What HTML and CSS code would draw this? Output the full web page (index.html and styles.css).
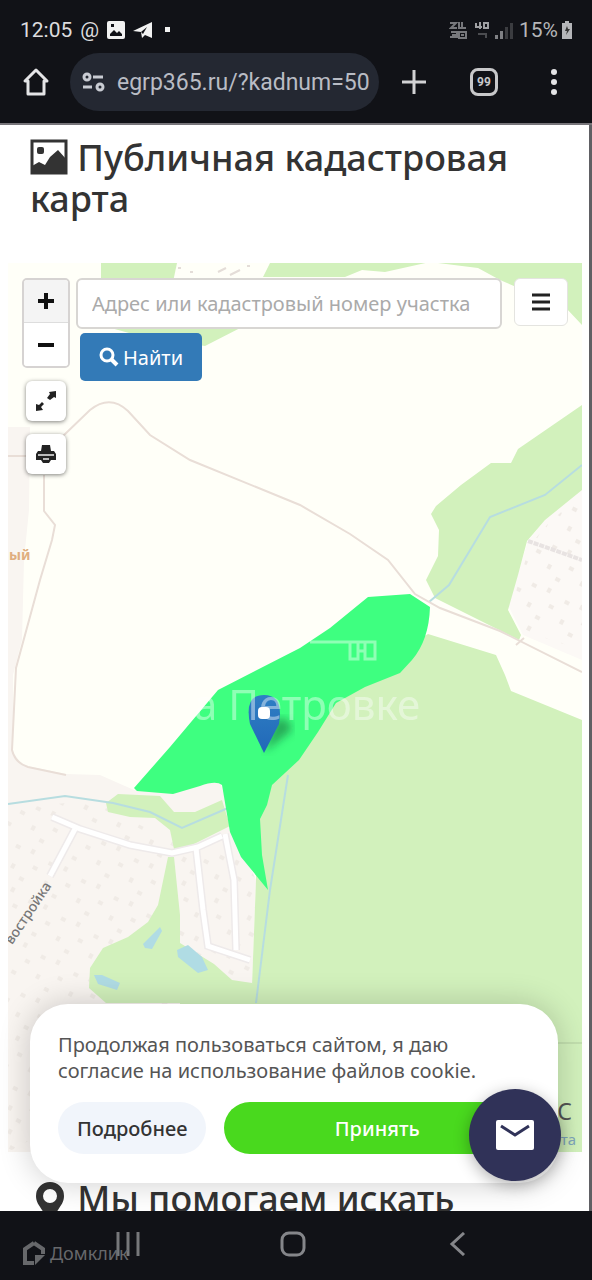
FILE: index.html
```html
<!DOCTYPE html>
<html lang="ru">
<head>
    <meta charset="UTF-8">
    <meta name="viewport" content="width=device-width, initial-scale=1.0">
    <title>Публичная кадастровая карта</title>
    <link rel="stylesheet" href="styles.css">
</head>
<body>
    <header class="browser">
        <div class="status-bar">
            <span class="clock">12:05</span>
            <span class="at">@</span>
            <svg class="status-icon" viewBox="0 0 18 18" width="18" height="18">
                <rect x="0" y="0" width="18" height="18" rx="2" fill="#f2f2f2"/>
                <path d="M3 13l4-4 3 3 2-2 3 3v2H3z" fill="#111217"/>
                <rect x="4" y="3" width="3" height="3" fill="#111217"/>
            </svg>
            <svg class="status-icon" viewBox="0 0 20 18" width="20" height="18">
                <path d="M0 10L19 1v16l-7-3-3 3-1-6z" fill="#f2f2f2"/>
                <path d="M8 11l6-5-4 7z" fill="#111217"/>
            </svg>
            <span class="dot"></span>
            <span class="status-right">
                <svg viewBox="0 0 66 20" width="66" height="20">
                    <g fill="none" stroke="#77787c" stroke-width="2">
                        <path d="M1 3h6l-5 5h6M10 2v6h7M13 2v5M2 12h6v5H1M10 12h7v6h-7zM3 15h4M12 15h3"/>
                        <path d="M27 3v4h6M31 2v7M35 3h4v5h-4z" stroke="#a0a1a4"/>
                        <path d="M29 14h8v4" stroke="#4b4c50"/>
                    </g>
                    <path d="M46 19v-4h3v4zM51 19v-8h3v8z" fill="#808185"/>
                    <path d="M56 19V7h3v12zM61 19V3h3v16z" fill="#3b3c40"/>
                </svg>
                <span class="battery-level">15%</span>
                <svg viewBox="0 0 10 18" width="10" height="18">
                    <path d="M3 0h4v2h3v16H0V2h3z" fill="#b5b6b9"/>
                    <path d="M5 5L3 10h2l-1 4 4-6H6z" fill="#333"/>
                </svg>
            </span>
        </div>
        <div class="toolbar">
            <button class="home" aria-label="Домой">
                <svg viewBox="0 0 28 30" width="28" height="30">
                    <path d="M14 3L3 14h3v13h16V14h3z" fill="none" stroke="#e4e4e6" stroke-width="3" stroke-linejoin="round"/>
                </svg>
            </button>
            <div class="address">
                <svg class="address-icon" viewBox="0 0 24 20" width="24" height="20">
                    <g fill="none" stroke="#c9ccd3" stroke-width="3">
                        <circle cx="6" cy="5" r="3"/>
                        <path d="M12 5h10M2 15h9"/>
                        <circle cx="19" cy="15" r="3"/>
                    </g>
                </svg>
                <input class="address-input" type="text" value="egrp365.ru/?kadnum=50" aria-label="Адресная строка">
            </div>
            <button class="tool" aria-label="Новая вкладка">
                <svg viewBox="0 0 26 26" width="26" height="26">
                    <path d="M13 1v24M1 13h24" stroke="#d2d2d4" stroke-width="3"/>
                </svg>
            </button>
            <button class="tool" aria-label="Вкладки">
                <span class="tab-count">99</span>
            </button>
            <button class="tool" aria-label="Меню">
                <svg viewBox="0 0 6 26" width="6" height="26" fill="#e4e4e6">
                    <circle cx="3" cy="3" r="3"/>
                    <circle cx="3" cy="13" r="3"/>
                    <circle cx="3" cy="23" r="3"/>
                </svg>
            </button>
        </div>
    </header>

    <main class="page">
        <h1 class="title">
            <svg class="title-icon" viewBox="0 0 38 36" width="38" height="36">
                <rect x="2" y="2" width="34" height="32" fill="#fff" stroke="#333" stroke-width="3"/>
                <rect x="7" y="8" width="7" height="7" rx="2" fill="#333"/>
                <path d="M2 34v-7l7-4 6 3 5-8 8-7 8 9v14z" fill="#333"/>
            </svg>
            Публичная кадастровая карта
        </h1>

        <section class="map">
            <svg class="map-canvas" viewBox="8 263 574 889" preserveAspectRatio="xMinYMin slice">
                <defs>
                    <pattern id="houses" width="37" height="43" patternUnits="userSpaceOnUse" patternTransform="rotate(28)">
                        <path d="M4 6h5v4H4zM20 3h4v5h-4zM29 17h5v4h-5zM9 25h4v5H9zM22 33h5v4h-5z" fill="#f0ebe6"/>
                    </pattern>
                    <linearGradient id="pin" x1="0" y1="0" x2="0" y2="1">
                        <stop offset="0" stop-color="#2f7fc4"/>
                        <stop offset="1" stop-color="#2168b8"/>
                    </linearGradient>
                    <filter id="soft"><feGaussianBlur stdDeviation="4"/></filter>
                </defs>
                <rect x="8" y="263" width="574" height="889" fill="#fffff8"/>

                <!-- settlements -->
                <path d="M8 427H30L29 510 24 560 22 640 13 675V752L22 765 66 774 100 775 134 790 220 782 240 845 256 880 252 985 220 1040 30 1152H8z" fill="#f9f5f1"/>
                <path d="M8 810L90 800 180 845 240 845 256 880 252 985 180 1060 8 1152z" fill="url(#houses)"/>
                <path d="M582 488L545 520 528 541 508 605 523 635 582 660z" fill="#fcf9f6"/>
                <path d="M582 493L547 525 530 545 512 605 527 632 582 650z" fill="url(#houses)"/>

                <!-- woods -->
                <g fill="#d2f1bc">
                    <path d="M101 263H177L173 282H101z"/>
                    <path d="M270 263H582V325L566 308 500 280 478 268 430 262 385 272 362 270 345 277H263z"/>
                    <path d="M100 325H246L205 346 140 336z"/>
                    <path d="M582 405L518 449 511 463H491L461 485 436 506 431 514 439 530 438 556 426 580 435 598 519 640 521 635 508 610 518 575 527 541 545 520 582 490z"/>
                    <path d="M428 634L496 655 505 675 511 691 582 720V1152H250L252 985 256 880 255 800 280 750 330 690 400 650z"/>
                    <path d="M106 803L118 794 160 796 174 812H195L222 800 230 826 190 846 174 849 170 830 155 818 130 817 108 812z"/>
                    <path d="M168 857L158 905 148 922 128 937 103 948 90 968 89 988 106 1003H252V983L232 980 214 964 180 943V915L174 857z"/>
                    <path d="M180 1003H582V1152H180z"/>
                </g>
                <path d="M555 1043h27" stroke="#c2dfae" stroke-width="2"/>

                <!-- ponds -->
                <g fill="#b0dce4">
                    <path d="M143 944L160 927 162 931 152 949 145 948z"/>
                    <path d="M177 950L188 945 202 957 208 970 198 973 178 957z"/>
                    <path d="M94 975H102L120 983 117 990 98 984z"/>
                </g>

                <!-- village streets -->
                <g fill="none" stroke="#eeeaea" stroke-width="8">
                    <path d="M52 817L80 829 130 845 172 853 198 847 222 836"/>
                    <path d="M75 829L50 876"/>
                    <path d="M196 848L203 910 208 946 250 960"/>
                    <path d="M225 834L234 880 236 950"/>
                </g>
                <g fill="none" stroke="#fff" stroke-width="5">
                    <path d="M52 817L80 829 130 845 172 853 198 847 222 836"/>
                    <path d="M75 829L50 876"/>
                    <path d="M196 848L203 910 208 946 250 960"/>
                    <path d="M225 834L234 880 236 950"/>
                </g>
                <path d="M528 541L582 560" fill="none" stroke="#e8e3e2" stroke-width="4" stroke-dasharray="5 1"/>

                <!-- streams -->
                <g fill="none" stroke="#b7dde0" stroke-width="2">
                    <path d="M8 804L65 796 113 803 150 812 182 828 228 808"/>
                    <path d="M429 602L449 585 490 517 545 495 582 465"/>
                    <path d="M288 775L270 890 256 1003"/>
                </g>

                <!-- dirt roads -->
                <g fill="none" stroke="#e9ded7" stroke-width="2">
                    <path d="M62 437L90 410Q110 394 128 411L150 435 190 460 300 505 350 534 388 560 415 594 440 608 500 631 582 672"/>
                    <path d="M44 475V511L55 525 52 540 40 580 16 668 12 750Q15 763 28 767L66 775"/>
                    <path d="M8 456H30"/>
                    <path d="M516 645L524 638"/>
                </g>
                <path d="M178 268h3M190 272h3M218 272l8-4M230 275l10-5M247 266h3" stroke="#e4ddd8" stroke-width="2"/>

                <text class="place" x="9" y="560">ый</text>
                <text class="street" text-anchor="end" transform="translate(52 886) rotate(-56)">востройка</text>

                <!-- selected plot -->
                <path d="M368 597L410 594 430 607Q429 640 412 660L400 673 365 687 336 703 318 732 299 760 272 785 267 805 260 819 262 855 268 890 241 857 230 832 222 785Q216 780 200 786L173 794 137 791 134 788 170 747 218 690 300 648 330 628z" fill="#3eff80"/>

                <path d="M264 752L292 730 288 720 276 718z" fill="#14743c" opacity="0.6" filter="url(#soft)"/>
                <path d="M264 753L250 724Q244 695 264 695 284 695 279 724z" fill="url(#pin)"/>
                <rect x="258" y="707" width="12" height="12" rx="4" fill="#fff"/>

                <!-- agency mark -->
                <g opacity="0.42">
                    <path d="M310 642H375V659H365V651H358V659H350V643M358 643V651M365 643V651" fill="none" stroke="#fff" stroke-width="3"/>
                    <text class="mark" x="194" y="720">а Петровке</text>
                </g>
            </svg>

            <div class="map-controls">
                <div class="map-left">
                    <div class="zoom-group">
                        <button class="zoom-btn zoom-in" aria-label="Приблизить"><svg viewBox="0 0 16 16" width="16" height="16"><path d="M8 0v16M0 8h16" stroke="#111" stroke-width="4"/></svg></button>
                        <button class="zoom-btn" aria-label="Отдалить"><svg viewBox="0 0 16 16" width="16" height="16"><path d="M0 8h16" stroke="#111" stroke-width="4"/></svg></button>
                    </div>
                    <button class="map-btn" aria-label="Во весь экран">
                        <svg viewBox="0 0 22 22" width="22" height="22" fill="#222">
                            <path d="M21 1v7l-2-1-4 3-3-2 3-4-1-2z"/>
                            <path d="M1 21v-7l3 1 3-3 2 2-3 3 2 3z"/>
                        </svg>
                    </button>
                    <button class="map-btn" aria-label="Печать">
                        <svg viewBox="0 0 22 20" width="22" height="20">
                            <path d="M7 1h8l1 6h3l2 3v6h-5l-2 3H8l-2-3H1v-6l2-3h3z" fill="#222"/>
                            <path d="M3 11h16M8 15h6" stroke="#bbb" stroke-width="2"/>
                        </svg>
                    </button>
                </div>
                <form class="search">
                    <input class="search-input" type="text" placeholder="Адрес или кадастровый номер участка" aria-label="Адрес или кадастровый номер участка">
                    <button class="search-btn" type="button">
                        <svg viewBox="0 0 20 20" width="20" height="20">
                            <circle cx="8" cy="8" r="6" fill="none" stroke="#fff" stroke-width="3"/>
                            <path d="M12 12l6 6" stroke="#fff" stroke-width="4"/>
                        </svg>
                        Найти
                    </button>
                </form>
                <button class="layers-btn" aria-label="Слои">
                    <svg viewBox="0 0 18 18" width="18" height="18"><path d="M0 2h18M0 9h18M0 16h18" stroke="#222" stroke-width="3"/></svg>
                </button>
            </div>

            <div class="attribution"><span class="scale">С</span><a class="credit" href="#">та</a></div>
        </section>

        <h2 class="title subtitle">
            <svg class="marker-icon" viewBox="0 0 28 40" width="28" height="40">
                <path d="M14 0a14 14 0 0 1 14 14c0 6-3 9-6 14l-8 12-8-12C3 23 0 20 0 14A14 14 0 0 1 14 0zm0 7a7 7 0 1 0 0 14 7 7 0 0 0 0-14z" fill="#333"/>
            </svg>
            Мы помогаем искать
        </h2>

        <div class="cookie">
            <p class="cookie-text">Продолжая пользоваться сайтом, я даю согласие на использование файлов cookie.</p>
            <div class="cookie-actions">
                <button class="pill more">Подробнее</button>
                <button class="pill accept">Принять</button>
            </div>
        </div>
        <button class="chat" aria-label="Написать нам">
            <svg viewBox="0 0 38 30" width="38" height="30">
                <rect width="38" height="30" rx="2" fill="#fff"/>
                <path d="M5 6l14 9 14-9" fill="none" stroke="#303258" stroke-width="3"/>
            </svg>
        </button>
    </main>

    <footer class="navbar">
        <button class="nav-btn" aria-label="Недавние"><svg viewBox="0 0 24 24" width="24" height="24"><path d="M2 0v24M12 0v24M22 0v24" stroke="#77787b" stroke-width="3"/></svg></button>
        <button class="nav-btn" aria-label="Главный экран"><svg viewBox="0 0 26 26" width="26" height="26"><rect x="2" y="2" width="22" height="22" rx="7" fill="none" stroke="#85868a" stroke-width="3"/></svg></button>
        <button class="nav-btn" aria-label="Назад"><svg viewBox="0 0 24 24" width="24" height="24"><path d="M18 1L6 12l12 11" fill="none" stroke="#85868a" stroke-width="3"/></svg></button>
        <div class="watermark">
            <svg viewBox="0 0 22 24" width="22" height="24">
                <path d="M11 2L2 8v14h9M11 2l9 6v5" fill="none" stroke="#67686b" stroke-width="4"/>
                <path d="M12 14h10L12 24z" fill="#67686b"/>
            </svg>
            Домклик
        </div>
    </footer>
</body>
</html>
```
FILE: styles.css
```css
* {
    box-sizing: border-box;
}

body {
    display: flex;
    flex-direction: column;
    height: 100vh;
    margin: 0;
    overflow: hidden;
    background-color: #fff;
    color: #333;
    font-family: "Noto Sans", "Open Sans", sans-serif;
}

button {
    display: flex;
    justify-content: center;
    align-items: center;
    padding: 0;
    border: none;
    background: none;
    font-family: inherit;
    cursor: pointer;
}

svg {
    flex: none;
}

.browser {
    flex: none;
    background-color: #111217;
    color: #dcdcde;
    font-family: Roboto, sans-serif;
    padding-bottom: 12px;
    border-bottom: 2px solid #77757a;
}

.status-bar {
    display: flex;
    align-items: center;
    gap: 8px;
    height: 53px;
    padding: 6px 20px 0;
    font-size: 21px;
}

.dot {
    width: 5px;
    height: 5px;
    margin-left: 4px;
    background-color: #f2f2f2;
}

.status-right {
    display: flex;
    align-items: center;
    gap: 4px;
    margin-left: auto;
    color: #b5b6b9;
}

.toolbar {
    display: flex;
    align-items: center;
    padding: 0 3px 0 22px;
}

.tool {
    width: 70px;
    height: 58px;
}

.address {
    display: flex;
    align-items: center;
    gap: 12px;
    flex: 1;
    min-width: 0;
    height: 58px;
    margin-left: 20px;
    padding: 0 8px 0 11px;
    border-radius: 29px;
    background-color: #242832;
}

.address-input {
    flex: 1;
    min-width: 0;
    padding: 0;
    border: none;
    background: none;
    color: #b9bcc4;
    font-family: Roboto, sans-serif;
    font-size: 23px;
}

.tab-count {
    width: 28px;
    height: 28px;
    border: 3px solid #c8c8ca;
    border-radius: 8px;
    color: #c8c8ca;
    font-size: 12px;
    font-weight: bold;
    line-height: 22px;
}

.page {
    position: relative;
    flex: 1;
    min-height: 0;
    overflow: hidden;
    border-right: 3px solid #606064;
    padding: 0 7px 0 8px;
}

.title {
    margin: 0;
    padding: 12px 22px 44px;
    font-size: 36px;
    font-weight: 500;
    line-height: 41px;
}

.title-icon {
    vertical-align: -4px;
}

.map {
    position: relative;
    height: 889px;
}

.map-canvas {
    display: block;
    width: 100%;
    height: 100%;
}

.place {
    fill: #e0ae80;
    font-size: 14px;
    font-weight: bold;
}

.street {
    fill: #777;
    font-size: 14px;
    font-weight: 500;
}

.mark {
    fill: #fff;
    font-size: 42px;
}

.map-controls {
    position: absolute;
    top: 15px;
    left: 14px;
    right: 14px;
    display: flex;
    align-items: flex-start;
}

.map-left {
    display: flex;
    flex-direction: column;
    align-items: center;
    gap: 13px;
    width: 48px;
}

.zoom-group {
    border: 2px solid #d6d3d2;
    border-radius: 5px;
    overflow: hidden;
}

.zoom-btn {
    width: 44px;
    height: 43px;
    background-color: #fff;
}

.zoom-in {
    background-color: #f4f4f4;
    border-bottom: 1px solid #ddd;
}

.map-btn {
    width: 40px;
    height: 40px;
    border-radius: 6px;
    background-color: #fff;
    box-shadow: 0 1px 4px rgba(0, 0, 0, 0.5);
}

.search {
    display: flex;
    flex-direction: column;
    align-items: flex-start;
    gap: 4px;
    flex: 1;
    min-width: 0;
    margin: 0 12px 0 6px;
}

.search-input {
    width: 100%;
    height: 51px;
    padding: 0 14px;
    border: 2px solid #d8d6d3;
    border-radius: 6px;
    background-color: #fff;
    font-family: inherit;
    font-size: 20px;
}

.search-input::placeholder {
    color: #aaa;
}

.search-btn {
    gap: 4px;
    width: 122px;
    height: 48px;
    margin-left: 4px;
    border-radius: 5px;
    background-color: #337ab7;
    color: #fff;
    font-size: 20px;
}

.layers-btn {
    width: 54px;
    height: 48px;
    border: 1px solid #e4e4e0;
    border-radius: 6px;
    background-color: #fff;
}

.attribution {
    position: absolute;
    right: 6px;
    bottom: 0;
    display: flex;
    flex-direction: column;
    align-items: flex-end;
}

.scale {
    padding-right: 4px;
    color: #555;
    font-size: 23px;
    line-height: 30px;
}

.credit {
    color: #7fa8bd;
    font-size: 15px;
    line-height: 26px;
    text-decoration: none;
}

.subtitle {
    padding: 26px 28px 0;
    white-space: nowrap;
}

.marker-icon {
    margin-right: 4px;
    vertical-align: -10px;
}

.cookie {
    position: absolute;
    left: 30px;
    right: 31px;
    bottom: 28px;
    padding: 28px 28px 29px;
    border-radius: 38px;
    background-color: #fff;
    box-shadow: 0 0 32px rgba(0, 0, 0, 0.2);
}

.cookie-text {
    margin: 0 0 18px;
    color: #555;
    font-size: 20px;
    line-height: 26px;
}

.cookie-actions {
    display: flex;
    gap: 18px;
}

.pill {
    height: 52px;
    border-radius: 26px;
    font-size: 20px;
    font-weight: 500;
}

.more {
    padding: 0 19px;
    background-color: #f1f5fb;
    color: #333;
}

.accept {
    flex: 1;
    background-color: #49d91e;
    color: #fff;
}

.chat {
    position: absolute;
    right: 28px;
    bottom: 30px;
    width: 92px;
    height: 92px;
    border-radius: 50%;
    background-color: #303258;
    box-shadow: 0 4px 16px rgba(0, 0, 0, 0.3);
}

.navbar {
    position: relative;
    flex: none;
    display: flex;
    justify-content: center;
    align-items: center;
    gap: 140px;
    height: 69px;
    padding: 0 7px 3px 0;
    background-color: #111217;
}

.watermark {
    position: absolute;
    left: 23px;
    bottom: 14px;
    display: flex;
    align-items: center;
    gap: 5px;
    color: #67686b;
    font-size: 18px;
    line-height: 26px;
}
```
